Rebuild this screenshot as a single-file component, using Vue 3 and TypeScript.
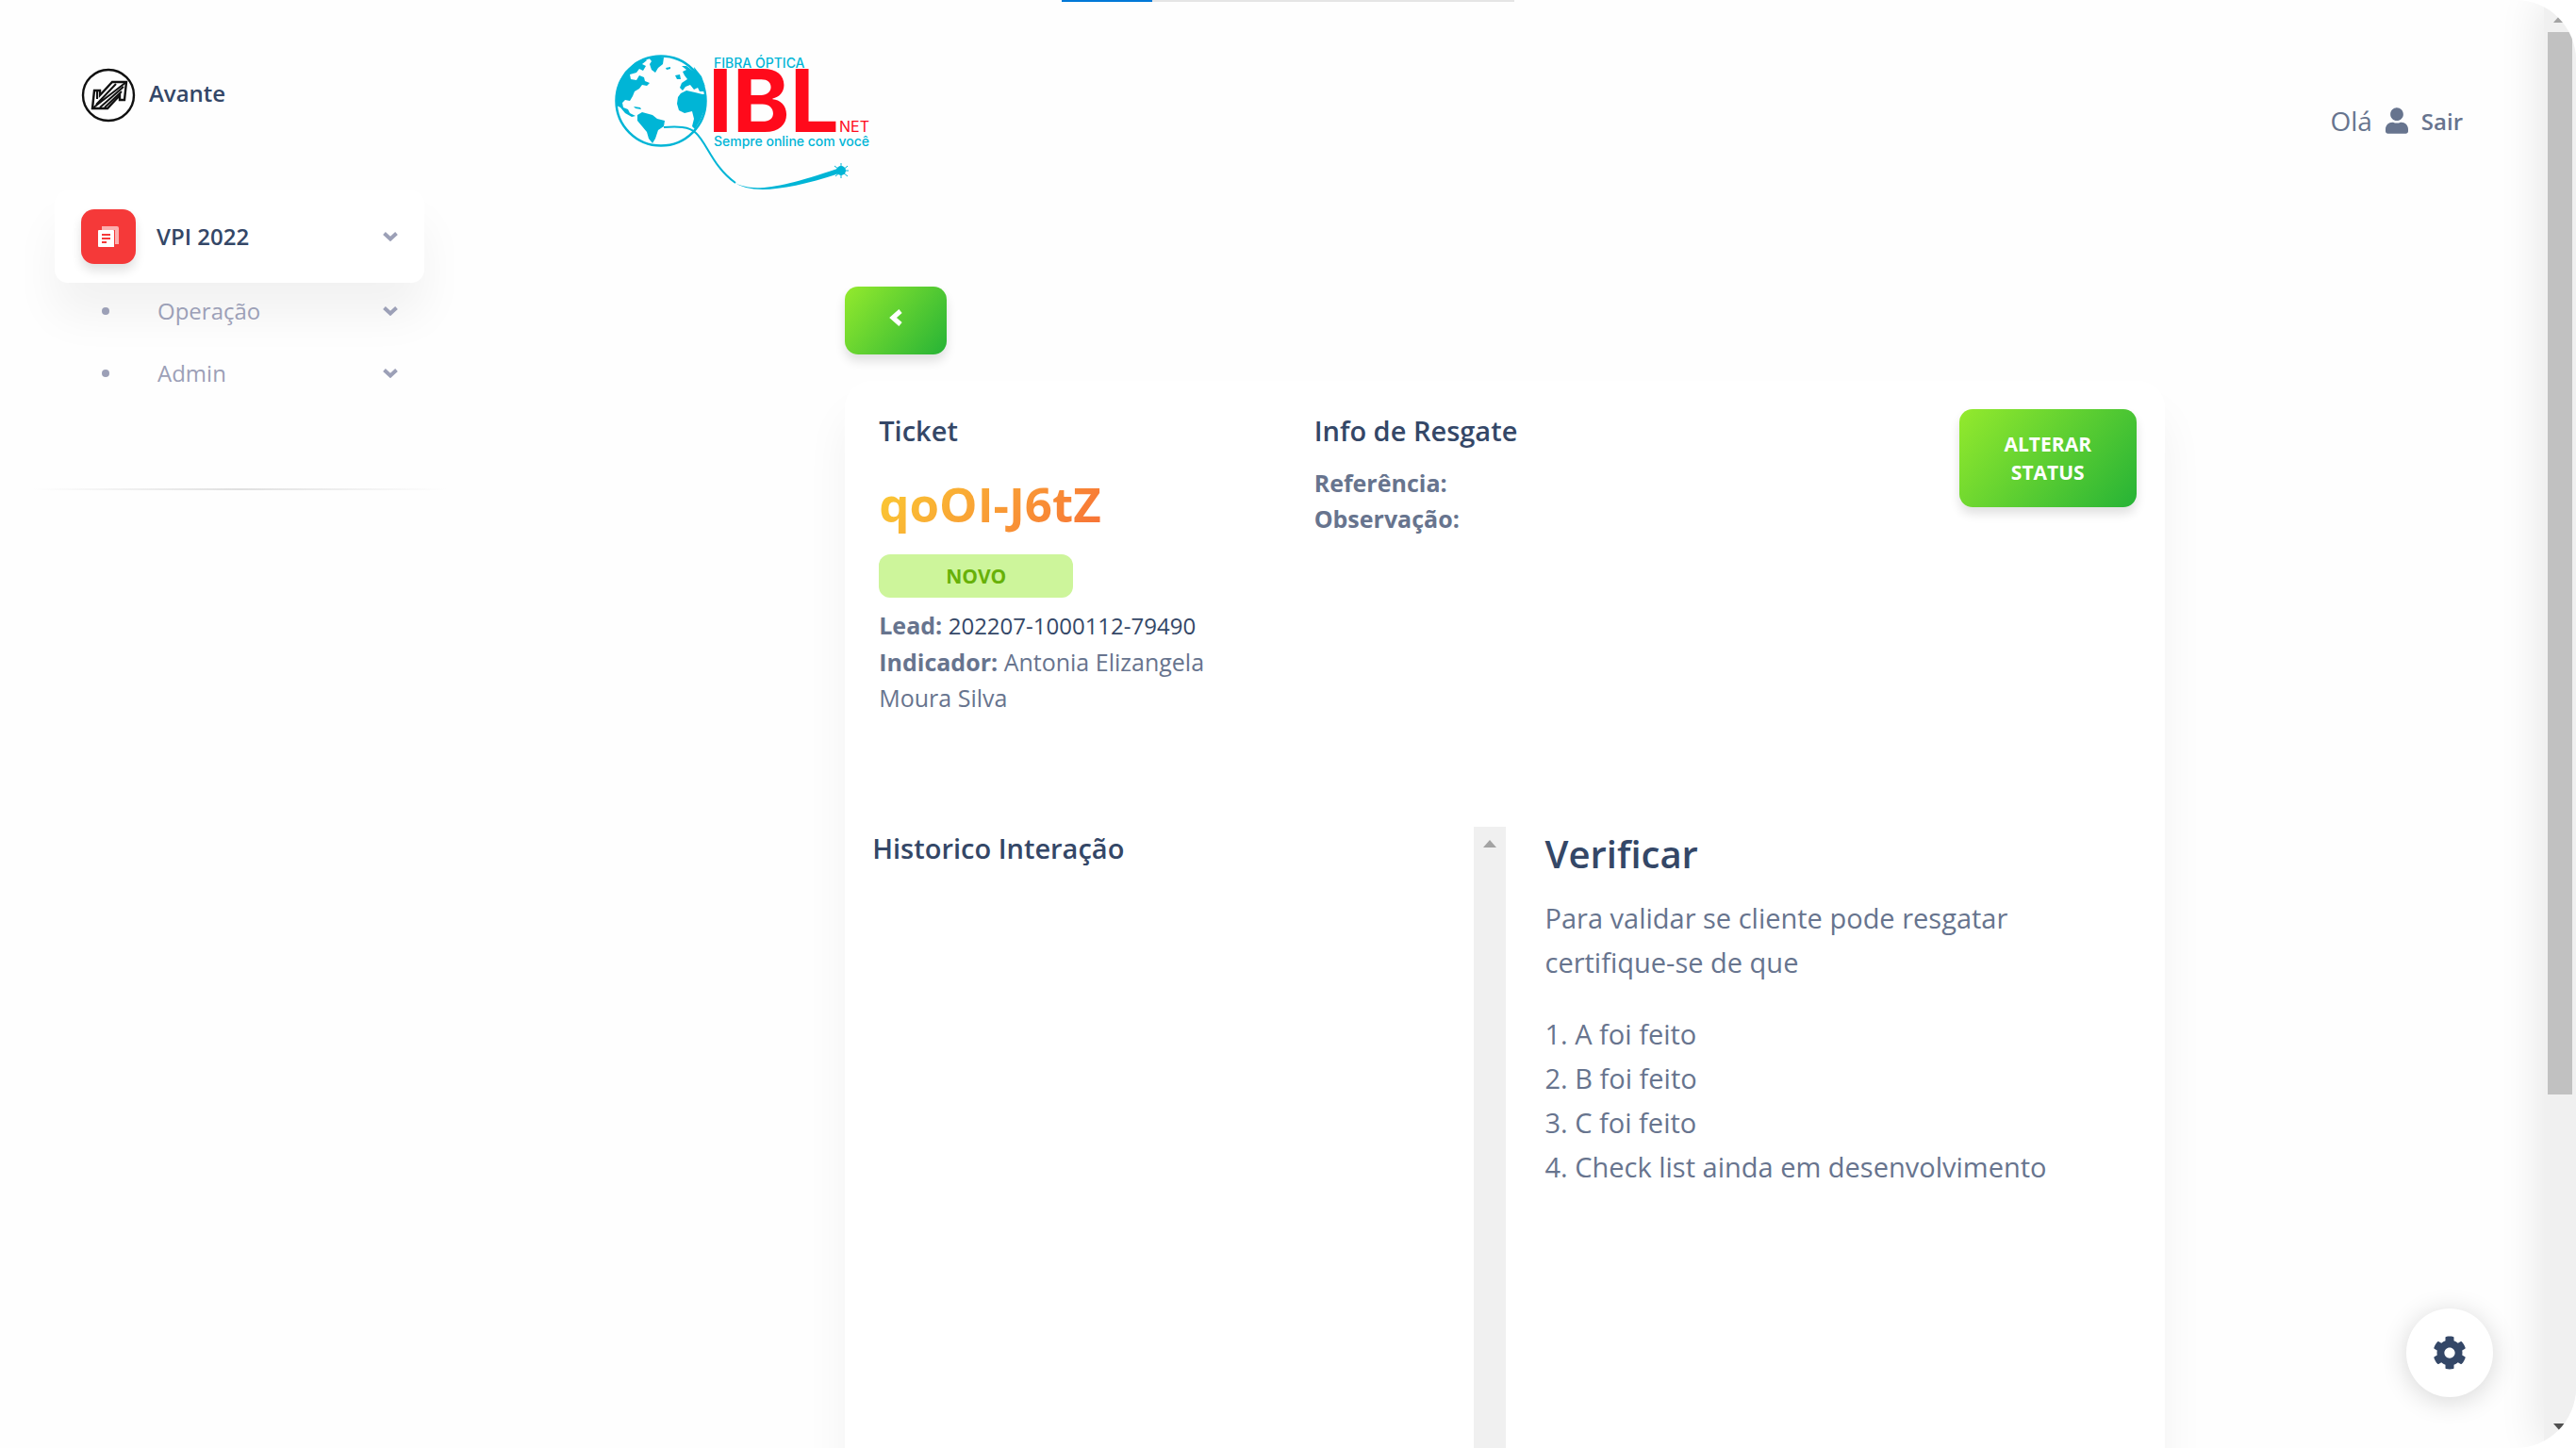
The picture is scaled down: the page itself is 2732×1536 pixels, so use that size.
<script setup lang="ts">
interface SubItem {
  label: string
}

interface InfoLine {
  label: string
  value: string
}

const subItems: SubItem[] = [{ label: 'Operação' }, { label: 'Admin' }]

const redeemInfo: InfoLine[] = [
  { label: 'Referência:', value: '' },
  { label: 'Observação:', value: '' },
]

const checks: string[] = [
  'A foi feito',
  'B foi feito',
  'C foi feito',
  'Check list ainda em desenvolvimento',
]
</script>

<template>
  <div class="page">
    <div class="progress"><div class="progress-value"></div></div>

    <aside class="sidebar">
      <a class="brand" href="#">
        <svg class="brand-icon" viewBox="0 0 58 58" fill="none" stroke="#111" aria-hidden="true">
          <circle cx="29" cy="29" r="27" stroke-width="2.4" />
          <path d="M12 43 L14 24 H20 V29 L33 15 H48 L46 34 H41 V29 L28 43 Z" stroke-width="2.4" />
          <path d="M12 43 L48 15 M16 39 L37 17 M20 42 L45 20 M25 42 L43 25 M17 25 V33" stroke-width="2" />
        </svg>
        <span>Avante</span>
      </a>

      <nav class="nav">
        <a class="nav-item" href="#">
          <span class="nav-icon">
            <svg viewBox="0 0 22 22" width="22" height="22" aria-hidden="true">
              <path d="M4 0H20Q22 0 22 2V19H18V4H4Z" fill="#fff" opacity="0.6" />
              <path fill-rule="evenodd" d="M1 4H16Q17 4 17 5V22H1Q0 22 0 21V5Q0 4 1 4ZM4 8V10H13V8ZM4 12V14H13V12ZM4 16V18H9V16Z" fill="#fff" />
            </svg>
          </span>
          <span class="nav-label">VPI 2022</span>
          <svg class="chevron" viewBox="0 0 16 10" aria-hidden="true"><path d="M1.500 1.500 L8 7.500 L14.500 1.500" /></svg>
        </a>
        <ul class="sub">
          <li v-for="item in subItems" :key="item.label">
            <a class="sub-item" href="#">
              <span class="dot"></span>
              <span class="nav-label">{{ item.label }}</span>
              <svg class="chevron" viewBox="0 0 16 10" aria-hidden="true"><path d="M1.500 1.500 L8 7.500 L14.500 1.500" /></svg>
            </a>
          </li>
        </ul>
      </nav>
      <hr class="divider" />
    </aside>

    <main class="main">
      <header class="header">
        <svg class="logo" viewBox="30 24 280 148" role="img" aria-label="IBL Net">
          <g fill="#00b5d6">
            <circle cx="81" cy="77" r="47.500" fill="none" stroke="#00b5d6" stroke-width="2.500" />
            <path d="M34 74L36 58L43 46L54 36L63 32L66 34L61 38L65 40L62 45L58 43L55 47L48 49L49 54L55 55L58 50L63 52L64 56L69 58L66 61L61 60L58 64L53 67L51 72L48 77L43 76L40 79L41 84L46 86L48 90L54 93L50 94L43 90L38 84L34 82Z" />
            <path d="M68 31L76 29L84 31L83 38L78 42L75 47L71 44L69 38L71 35Z" />
            <path d="M86 42L91 41L91 43L87 44ZM52 83L59 84L60 86L54 85Z" />
            <path d="M56 92L61 89L72 92L77 96L85 98L84 104L78 108L75 117L72 122L68 117L66 110L61 104L56 98Z" />
            <path d="M96 50L101 49L102 54L98 54ZM103 40L108 40L119 48L126 60L128 67L122 67L120 63L116 65L112 60L107 62L104 66L101 63L103 58L109 54L106 50L104 46L108 44Z" />
            <path d="M102 69L108 66L117 68L125 70L129 70L128 84L123 97L117 107L114 104L116 96L114 88L106 90L100 87L98 80L99 73Z" />
            <path d="M116 41L124 51L128 62L122 56L117 50Z" />
          </g>
          <path d="M84 105C98 104 111 104 118 111C130 122 136 147 160 164" fill="none" stroke="#00b5d6" stroke-width="2" />
          <path d="M158 163C176 174 204 171 268 149L270 154C212 173 176 176 158 163Z" fill="#00b5d6" />
          <circle cx="272" cy="151" r="5" fill="#00b5d6" />
          <path d="M272 143V159M265 146L279 157M279 146L266 157M272 151H280" stroke="#00b5d6" stroke-width="1" />
          <text class="logo-small" x="137" y="42">FIBRA ÓPTICA</text>
          <text class="logo-big" x="131" y="110">IBL</text>
          <text class="logo-net" x="270" y="110">NET</text>
          <text class="logo-small" x="137" y="125">Sempre online com você</text>
        </svg>

        <div class="user">
          <span>Olá</span>
          <a class="logout" href="#">
            <svg viewBox="0 0 448 512" width="24" height="28" aria-hidden="true">
              <path fill="currentColor" d="M224 256c70.700 0 128-57.300 128-128S294.700 0 224 0 96 57.300 96 128s57.300 128 128 128zm89.600 32h-16.700c-22.200 10.200-46.900 16-72.900 16s-50.600-5.800-72.900-16h-16.700C60.200 288 0 348.200 0 422.400V464c0 26.500 21.500 48 48 48h352c26.500 0 48-21.500 48-48v-41.600c0-74.200-60.200-134.400-134.400-134.400z" />
            </svg>
            <span>Sair</span>
          </a>
        </div>
      </header>

      <div class="content">
        <button class="btn back" type="button" aria-label="Voltar">
          <svg viewBox="0 0 14 18" width="14" height="18" aria-hidden="true">
            <path d="M12 2L4 9L12 16" fill="none" stroke="#fff" stroke-width="5" />
          </svg>
        </button>

        <section class="card">
          <div class="summary">
            <div class="ticket">
              <h6>Ticket</h6>
              <h3 class="code">qoOI-J6tZ</h3>
              <span class="badge">NOVO</span>
              <p><b>Lead:</b> <a class="lead" href="#">202207-1000112-79490</a></p>
              <p><b>Indicador:</b> Antonia Elizangela Moura Silva</p>
            </div>
            <div class="redeem">
              <h6>Info de Resgate</h6>
              <p v-for="line in redeemInfo" :key="line.label"><b>{{ line.label }}</b> {{ line.value }}</p>
            </div>
            <button class="btn status" type="button">ALTERAR<br />STATUS</button>
          </div>

          <div class="details">
            <div class="history">
              <h6>Historico Interação</h6>
              <div class="track">
                <svg viewBox="0 0 14 8" width="14" height="8" aria-hidden="true"><path d="M0 8L7 0L14 8Z" fill="#a3a3a3" /></svg>
              </div>
            </div>
            <div class="verify">
              <h4>Verificar</h4>
              <p>Para validar se cliente pode resgatar certifique-se de que</p>
              <ol>
                <li v-for="check in checks" :key="check">{{ check }}</li>
              </ol>
            </div>
          </div>
        </section>
      </div>
    </main>

    <div class="page-track">
      <svg viewBox="0 0 14 8" width="14" height="8" aria-hidden="true"><path d="M0 8L7 0L14 8Z" fill="#a3a3a3" /></svg>
      <div class="thumb"></div>
      <svg viewBox="0 0 14 8" width="14" height="8" aria-hidden="true"><path d="M0 0L7 8L14 0Z" fill="#505050" /></svg>
    </div>

    <button class="settings" type="button" aria-label="Configurações">
      <svg viewBox="0 0 512 512" width="36" height="36" aria-hidden="true">
        <path fill="currentColor" d="M487.400 315.700l-42.600-24.600c4.300-23.200 4.300-47 0-70.200l42.600-24.600c4.900-2.800 7.100-8.600 5.500-14-11.100-35.600-30-67.800-54.700-94.600-3.800-4.100-10-5.100-14.800-2.300L380.800 110c-17.900-15.400-38.500-27.300-60.800-35.100V25.800c0-5.600-3.900-10.500-9.400-11.700-36.700-8.200-74.300-7.800-109.200 0-5.500 1.200-9.400 6.100-9.400 11.700V75c-22.200 7.900-42.800 19.800-60.800 35.100L88.700 85.500c-4.900-2.800-11-1.900-14.800 2.300-24.700 26.700-43.600 58.900-54.700 94.600-1.700 5.400.6 11.200 5.500 14L67.300 221c-4.300 23.200-4.300 47 0 70.200l-42.600 24.600c-4.900 2.800-7.100 8.600-5.500 14 11.100 35.600 30 67.800 54.700 94.600 3.800 4.100 10 5.100 14.800 2.300l42.600-24.600c17.900 15.400 38.500 27.300 60.800 35.100v49.200c0 5.600 3.900 10.500 9.400 11.700 36.700 8.200 74.300 7.800 109.200 0 5.500-1.200 9.400-6.100 9.400-11.700v-49.200c22.200-7.900 42.800-19.800 60.800-35.100l42.600 24.600c4.900 2.800 11 1.900 14.800-2.300 24.700-26.700 43.600-58.900 54.700-94.600 1.500-5.500-.7-11.300-5.600-14.100zM256 336c-44.100 0-80-35.900-80-80s35.900-80 80-80 80 35.900 80 80-35.900 80-80 80z" />
      </svg>
    </button>
  </div>
</template>

<style>
html,
body {
  background: #fff;
}
</style>

<style scoped>
.page {
  position: relative;
  display: flex;
  height: 100vh;
  overflow: hidden;
  border-radius: 0 64px 64px 0;
  background: #fefefe;
  color: #67748e;
  font-family: 'Open Sans', 'Noto Sans', sans-serif;
  font-size: 29px;
  line-height: 47px;
}
h3, h4, h6, p, ol, ul {
  margin: 0;
  padding: 0;
}
a {
  color: inherit;
  text-decoration: none;
}
svg {
  display: block;
}
.progress {
  position: absolute;
  top: 0;
  left: 50%;
  width: 480px;
  height: 2px;
  margin-left: -240px;
  background: #e5e5e5;
}
.progress-value {
  width: 20%;
  height: 100%;
  background: #0078d7;
}

.sidebar {
  flex: none;
  box-sizing: border-box;
  width: 494px;
  padding: 72px 44px 0 58px;
  font-size: 24px;
  line-height: 38px;
}
.brand {
  display: flex;
  align-items: center;
  gap: 14px;
  padding-left: 28px;
  color: #344767;
  font-weight: 600;
}
.brand span {
  padding-bottom: 4px;
}
.brand-icon {
  width: 58px;
  height: 58px;
}
.nav {
  margin-top: 72px;
}
.nav-item {
  display: flex;
  align-items: center;
  box-sizing: border-box;
  height: 98px;
  padding: 0 28px;
  border-radius: 14px;
  background: #fff;
  box-shadow: 0 35px 47px rgba(0, 0, 0, 0.05);
  color: #344767;
  font-weight: 600;
}
.nav-icon {
  display: grid;
  place-items: center;
  width: 58px;
  height: 58px;
  margin-right: 22px;
  border-radius: 14px;
  background: #f53939;
  box-shadow: 0 7px 11px rgba(0, 0, 0, 0.12);
}
.nav-label {
  flex: 1;
}
.chevron {
  width: 16px;
  height: 10px;
}
.chevron path {
  fill: none;
  stroke: #9ca0b7;
  stroke-width: 4;
}
.sub {
  display: flex;
  flex-direction: column;
  gap: 6px;
  list-style: none;
}
.sub-item {
  display: flex;
  align-items: center;
  height: 60px;
  padding: 0 28px 0 50px;
  color: #9ca0b7;
}
.dot {
  width: 8px;
  height: 8px;
  margin-right: 51px;
  border-radius: 50%;
  background: #9ca0b7;
}
.divider {
  height: 2px;
  margin: 92px -24px 0 -24px;
  border: 0;
  background: linear-gradient(90deg, transparent, #e0e0e0, transparent);
}

.main {
  flex: 1;
  min-width: 0;
}
.header {
  display: flex;
  align-items: center;
  justify-content: space-between;
  padding: 54px 86px 0 156px;
}
.logo {
  width: 280px;
  height: 148px;
  overflow: visible;
}
.logo-small {
  fill: #00b5d6;
  font: 500 14px Inter, sans-serif;
}
.logo-big {
  fill: #ff0a1b;
  font: 700 92px Inter, sans-serif;
}
.logo-net {
  fill: #ff0a1b;
  font: 400 16px Inter, sans-serif;
}
.user,
.logout {
  display: flex;
  align-items: center;
}
.user {
  gap: 14px;
  font-size: 28px;
}
.logout {
  gap: 14px;
  font-size: 24px;
  font-weight: 600;
}

.content {
  width: 63.5%;
  margin: 102px auto 0;
}
.btn {
  border: 0;
  border-radius: 14px;
  background: linear-gradient(310deg, #26b336, #94ea2d);
  box-shadow: 0 7px 11px rgba(0, 0, 0, 0.12);
  color: #fff;
  font: 700 21px/30px 'Open Sans', 'Noto Sans', sans-serif;
}
.back {
  display: flex;
  justify-content: center;
  width: 108px;
  height: 72px;
  padding: 24px 0 0;
}
.card {
  margin-top: 28px;
  border-radius: 28px;
  background: #fff;
  box-shadow: 0 35px 47px rgba(0, 0, 0, 0.05);
}
.summary {
  display: grid;
  grid-template-columns: 34.6% 1fr auto;
  align-items: start;
  padding: 30px 30px 118px 36px;
  font-size: 25px;
  line-height: 38px;
}
.ticket,
.redeem {
  padding-top: 4px;
}
.ticket {
  padding-right: 56px;
}
h6 {
  color: #344767;
  font-size: 29px;
  font-weight: 600;
  line-height: 38px;
}
.redeem h6 {
  margin-bottom: 17px;
}
.code {
  margin: 22px 0 18px;
  background: linear-gradient(310deg, #f53939, #fbcf33);
  background-clip: text;
  -webkit-background-clip: text;
  color: transparent;
  font-size: 51px;
  font-weight: 700;
  line-height: 72px;
}
.badge {
  display: block;
  width: 206px;
  margin-bottom: 10px;
  border-radius: 12px;
  background: #cdf59b;
  color: #67b108;
  font-size: 21px;
  font-weight: 700;
  line-height: 46px;
  text-align: center;
}
.lead {
  color: #344767;
  font-size: 24px;
}
.status {
  width: 188px;
  height: 104px;
}
.details {
  display: flex;
  padding: 0 28px 0 29px;
}
.history {
  display: flex;
  justify-content: space-between;
  flex: none;
  width: 50%;
  height: 900px;
}
.history h6 {
  padding-top: 4px;
}
.track {
  display: flex;
  justify-content: center;
  box-sizing: border-box;
  width: 34px;
  padding-top: 14px;
  background: #f0f0f0;
}
.verify {
  flex: 1;
  margin-left: 42px;
}
h4 {
  margin-bottom: 15px;
  color: #344767;
  font-size: 40px;
  font-weight: 600;
  line-height: 58px;
}
.verify p {
  max-width: 560px;
  margin-bottom: 29px;
}
ol {
  list-style-position: inside;
}

.page-track {
  display: flex;
  flex: none;
  flex-direction: column;
  align-items: center;
  box-sizing: border-box;
  width: 34px;
  padding: 16px 4px 18px;
  background: #f0f0f0;
  box-shadow: 0 0 47px rgba(0, 0, 0, 0.12);
}
.thumb {
  width: 26px;
  height: 75%;
  margin: 10px 0 auto;
  background: #c1c1c1;
}
.settings {
  position: absolute;
  right: 88px;
  bottom: 54px;
  display: grid;
  place-items: center;
  width: 92px;
  height: 94px;
  padding: 0;
  border: 0;
  border-radius: 50%;
  background: #fff;
  box-shadow: 0 4px 28px rgba(0, 0, 0, 0.16);
  color: #344767;
}
</style>
